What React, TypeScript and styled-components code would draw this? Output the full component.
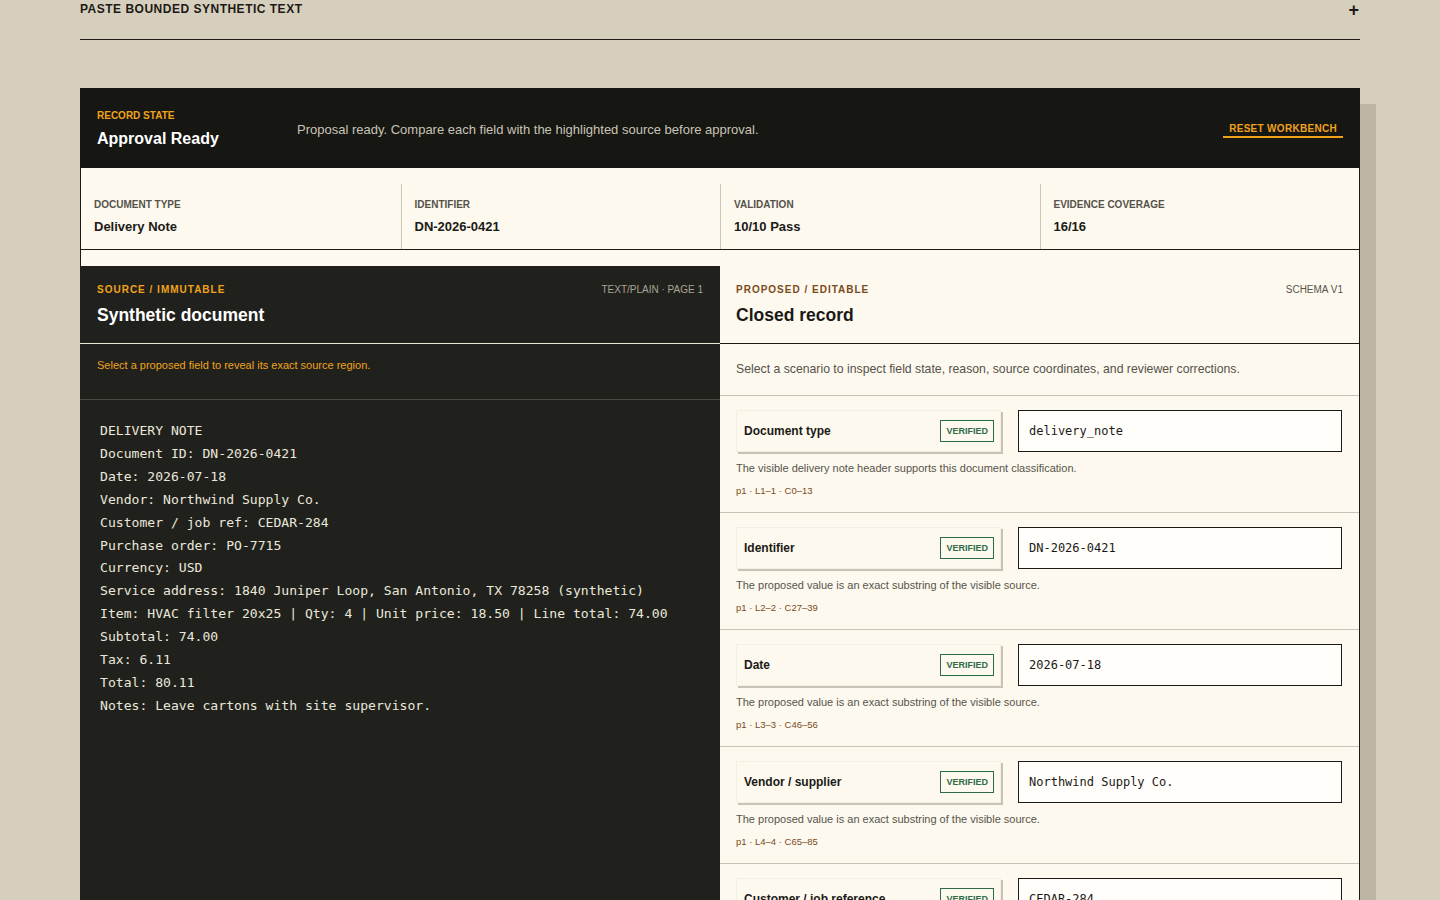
import React, { FC } from 'react'
import styled, { createGlobalStyle } from 'styled-components'

const GlobalStyle = createGlobalStyle`
  html, body {
    margin: 0;
    padding: 0;
    background: #d7cfbd;
    font-family: 'Liberation Sans', Arial, sans-serif;
    color: #1b1a16;
  }
  * {
    box-sizing: border-box;
  }
`

const Page = styled.div`
  padding: 0 80px 80px 80px;
`

const PasteBar = styled.div`
  height: 40px;
  display: flex;
  justify-content: space-between;
  align-items: flex-start;
  border-bottom: 1px solid #1b1a16;
  margin-bottom: 48px;
`

const PasteTitle = styled.div`
  font-size: 12px;
  font-weight: 700;
  letter-spacing: 0.5px;
  line-height: 18px;
`

const PlusGlyph = styled.span`
  font-size: 18px;
  font-weight: 700;
  line-height: 20px;
  margin-right: 1px;
`

const Card = styled.div`
  background: #fdf9ef;
  border: 1px solid #1b1a16;
  box-shadow: 16px 16px 0 #bdb6a5;
`

const StateBar = styled.div`
  background: #161613;
  height: 80px;
  margin: -1px -1px 0 -1px;
  padding: 2px 17px 0 17px;
  display: grid;
  grid-template-columns: 200px 1fr auto;
  align-items: center;
`

const Eyebrow = styled.div<{ $tone: string }>`
  font-size: 10px;
  font-weight: 700;
  letter-spacing: ${(p) => (p.$tone === 'state' ? '0' : '1px')};
  text-transform: uppercase;
  color: ${(p) => (p.$tone === 'brown' ? '#7a4a1c' : '#f0a21d')};
  line-height: 14px;
`

const StateTitle = styled.div`
  font-size: 16px;
  font-weight: 700;
  color: #ffffff;
  margin-top: 6px;
  line-height: 20px;
`

const StateMessage = styled.div`
  font-size: 13px;
  color: #c9c4b6;
`

const ResetButton = styled.button`
  background: none;
  border: none;
  border-bottom: 2px solid #f0a21d;
  color: #f0a21d;
  font-family: inherit;
  font-size: 10px;
  font-weight: 700;
  letter-spacing: 0.3px;
  padding: 0 6px 2px 6px;
  margin-top: 2px;
  cursor: pointer;
`

const Metrics = styled.div`
  display: grid;
  grid-template-columns: repeat(4, 1fr);
  padding-top: 16px;
  border-bottom: 1px solid #1b1a16;
`

const Metric = styled.div`
  padding: 14px 13px 14px 13px;
  & + & {
    border-left: 1px solid #cbc5b6;
  }
`

const MetricLabel = styled.div`
  font-size: 10px;
  font-weight: 700;
  color: #55524a;
  line-height: 14px;
`

const MetricValue = styled.div`
  font-size: 13px;
  font-weight: 700;
  color: #1b1a16;
  margin-top: 7px;
  line-height: 16px;
`

const Panels = styled.div`
  display: grid;
  grid-template-columns: 1fr 1fr;
  margin-top: 16px;
`

const SourcePanel = styled.section`
  background: #20211d;
  margin-left: -1px;
`

const RecordPanel = styled.section`
  background: #fdf9ef;
`

const PanelHead = styled.div<{ $dark?: boolean }>`
  height: 78px;
  padding: 17px ${(p) => (p.$dark ? '17px' : '16px')};
  display: flex;
  justify-content: space-between;
  align-items: flex-start;
  border-bottom: 1px solid ${(p) => (p.$dark ? '#ebe6d6' : '#1b1a16')};
`

const PanelTitle = styled.div<{ $dark?: boolean }>`
  font-size: 17.5px;
  font-weight: 700;
  color: ${(p) => (p.$dark ? '#ffffff' : '#1b1a16')};
  margin-top: 7px;
  line-height: 22px;
`

const PanelMeta = styled.div<{ $dark?: boolean }>`
  font-size: 10px;
  color: ${(p) => (p.$dark ? '#a8a496' : '#57544b')};
  line-height: 14px;
`

const SourceHint = styled.div`
  height: 56px;
  padding: 15px 17px 0 17px;
  font-size: 11px;
  color: #f0a21d;
  border-bottom: 1px solid #4b4b45;
`

const SourceText = styled.pre`
  margin: 0;
  padding: 20px 20px 40px 20px;
  font-family: 'DejaVu Sans Mono', 'Liberation Mono', monospace;
  font-size: 13.1px;
  line-height: 22.9px;
  color: #ebe7db;
  white-space: pre-wrap;
`

const RecordIntro = styled.div`
  height: 52px;
  padding: 18px 16px 0 16px;
  font-size: 12.25px;
  color: #55524a;
  border-bottom: 1px solid #c9c3b5;
`

const FieldRow = styled.div`
  height: 117px;
  padding: 14px 17px 0 16px;
  border-bottom: 1px solid #c9c3b5;
`

const FieldTop = styled.div`
  display: grid;
  grid-template-columns: 265px 1fr;
  gap: 17px;
`

const FieldButton = styled.button`
  height: 42px;
  display: flex;
  align-items: center;
  justify-content: space-between;
  background: #fdf9ef;
  border: 1px solid #f4efe2;
  box-shadow: 2px 2px 0 #c9c3b5;
  padding: 0 6px 0 7px;
  font-family: inherit;
  font-size: 12px;
  font-weight: 700;
  color: #1b1a16;
  cursor: pointer;
`

const Badge = styled.span`
  border: 1px solid #2f6b47;
  color: #2f6b47;
  font-size: 9px;
  font-weight: 700;
  padding: 0 5px;
  height: 22px;
  line-height: 20px;
`

const FieldInput = styled.input`
  height: 42px;
  border: 1px solid #1b1a16;
  background: #fffefb;
  padding: 0 10px;
  font-family: 'DejaVu Sans Mono', 'Liberation Mono', monospace;
  font-size: 12px;
  color: #1b1a16;
  outline: none;
`

const Reason = styled.div`
  font-size: 11px;
  color: #57544b;
  margin-top: 9px;
  line-height: 14px;
`

const Coords = styled.div`
  font-size: 9.5px;
  color: #7a4a1c;
  margin-top: 10px;
  line-height: 12px;
`

const sourceLines = [
  'DELIVERY NOTE',
  'Document ID: DN-2026-0421',
  'Date: 2026-07-18',
  'Vendor: Northwind Supply Co.',
  'Customer / job ref: CEDAR-284',
  'Purchase order: PO-7715',
  'Currency: USD',
  'Service address: 1840 Juniper Loop, San Antonio, TX 78258 (synthetic)',
  'Item: HVAC filter 20x25 | Qty: 4 | Unit price: 18.50 | Line total: 74.00',
  'Subtotal: 74.00',
  'Tax: 6.11',
  'Total: 80.11',
  'Notes: Leave cartons with site supervisor.',
]

const metrics = [
  { label: 'Document type', value: 'Delivery Note' },
  { label: 'Identifier', value: 'DN-2026-0421' },
  { label: 'Validation', value: '10/10 Pass' },
  { label: 'Evidence coverage', value: '16/16' },
]

const substring = 'The proposed value is an exact substring of the visible source.'

const fields = [
  {
    label: 'Document type',
    value: 'delivery_note',
    reason: 'The visible delivery note header supports this document classification.',
    coords: 'p1 · L1–1 · C0–13',
  },
  { label: 'Identifier', value: 'DN-2026-0421', reason: substring, coords: 'p1 · L2–2 · C27–39' },
  { label: 'Date', value: '2026-07-18', reason: substring, coords: 'p1 · L3–3 · C46–56' },
  { label: 'Vendor / supplier', value: 'Northwind Supply Co.', reason: substring, coords: 'p1 · L4–4 · C65–85' },
  { label: 'Customer / job reference', value: 'CEDAR-284', reason: substring, coords: 'p1 · L5–5 · C86–95' },
]

const MetricCell: FC<{ label: string; value: string }> = ({ label, value }) => (
  <Metric>
    <MetricLabel>{label.toUpperCase()}</MetricLabel>
    <MetricValue>{value}</MetricValue>
  </Metric>
)

const App: FC = () => {
  return (
    <Page>
      <GlobalStyle />
      <PasteBar>
        <PasteTitle>PASTE BOUNDED SYNTHETIC TEXT</PasteTitle>
        <PlusGlyph>+</PlusGlyph>
      </PasteBar>
      <Card>
        <StateBar>
          <div>
            <Eyebrow $tone='state'>Record state</Eyebrow>
            <StateTitle>Approval Ready</StateTitle>
          </div>
          <StateMessage>Proposal ready. Compare each field with the highlighted source before approval.</StateMessage>
          <ResetButton>RESET WORKBENCH</ResetButton>
        </StateBar>
        <Metrics>
          {metrics.map((m) => (
            <MetricCell key={m.label} label={m.label} value={m.value} />
          ))}
        </Metrics>
        <Panels>
          <SourcePanel>
            <PanelHead $dark>
              <div>
                <Eyebrow $tone='orange'>Source / immutable</Eyebrow>
                <PanelTitle $dark>Synthetic document</PanelTitle>
              </div>
              <PanelMeta $dark>TEXT/PLAIN · PAGE 1</PanelMeta>
            </PanelHead>
            <SourceHint>Select a proposed field to reveal its exact source region.</SourceHint>
            <SourceText>{sourceLines.join('\n')}</SourceText>
          </SourcePanel>
          <RecordPanel>
            <PanelHead>
              <div>
                <Eyebrow $tone='brown'>Proposed / editable</Eyebrow>
                <PanelTitle>Closed record</PanelTitle>
              </div>
              <PanelMeta>SCHEMA V1</PanelMeta>
            </PanelHead>
            <RecordIntro>
              Select a scenario to inspect field state, reason, source coordinates, and reviewer corrections.
            </RecordIntro>
            {fields.map((f) => (
              <FieldRow key={f.label}>
                <FieldTop>
                  <FieldButton>
                    {f.label}
                    <Badge>VERIFIED</Badge>
                  </FieldButton>
                  <FieldInput defaultValue={f.value} />
                </FieldTop>
                <Reason>{f.reason}</Reason>
                <Coords>{f.coords}</Coords>
              </FieldRow>
            ))}
          </RecordPanel>
        </Panels>
      </Card>
    </Page>
  )
}

export default App
